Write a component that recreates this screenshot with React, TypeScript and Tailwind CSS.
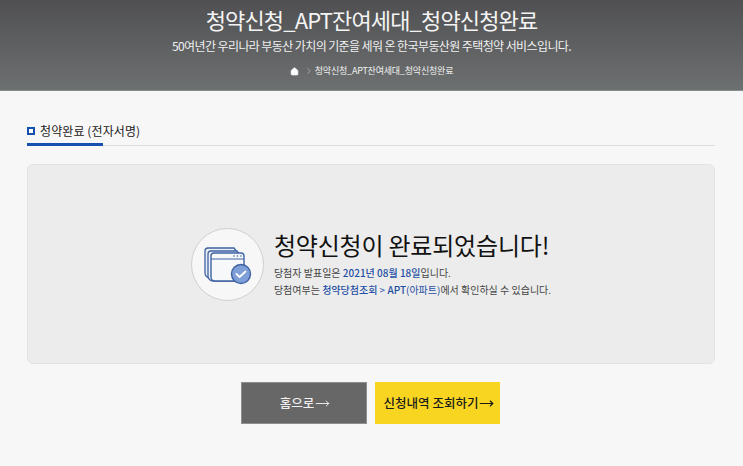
import { ChevronRight, Home, MoveRight } from "lucide-react";

const fontStack = "font-['Noto_Sans_CJK_KR','Noto_Sans',sans-serif]";

function WindowsIcon() {
  return (
    <svg width="50" height="42" viewBox="0 0 50 42" fill="none">
      <path d="M3 8 a3 3 0 0 1 3-3 h26 l3 4 v26 H8 a5 5 0 0 1-5-5 z" fill="#e9edf5" stroke="#3f62a3" strokeWidth="1.3" />
      <path d="M6 11 a3 3 0 0 1 3-3 h26 l3 4 v26 H11 a5 5 0 0 1-5-5 z" fill="#eef1f7" stroke="#3f62a3" strokeWidth="1.3" />
      <path d="M9 13 a3 3 0 0 1 3-3 h27 a3 3 0 0 1 3 3 v22 a3 3 0 0 1-3 3 H13 a4 4 0 0 1-4-4 z" fill="#f7f8fa" stroke="#3f62a3" strokeWidth="1.4" />
      <path d="M9 16 H42" stroke="#3f62a3" strokeWidth="1.2" />
      <circle cx="32" cy="13" r="0.8" fill="#3f62a3" />
      <circle cx="35.5" cy="13" r="0.8" fill="#3f62a3" />
      <circle cx="39" cy="13" r="0.8" fill="#3f62a3" />
      <circle cx="39" cy="31" r="9.5" fill="#7f9fd8" stroke="#3f62a3" strokeWidth="1.4" />
      <path d="M34.5 31 l3 3 l6-5.5" stroke="#fff" strokeWidth="1.8" strokeLinecap="round" strokeLinejoin="round" />
    </svg>
  );
}

export default function App() {
  return (
    <div className={`${fontStack} h-[466px] w-[743px] overflow-hidden bg-[#f7f7f7]`}>
      {/* HEADER */}
      <div className="flex h-[91px] flex-col items-center border-b border-[#8a8c8c] bg-gradient-to-b from-[#505052] to-[#6d7070] text-white">
        <h1 className="mt-[3px] text-[22px] leading-[32px] font-normal tracking-[-0.85px] text-[#f4f4f4]">
          청약신청_APT잔여세대_청약신청완료
        </h1>
        <p className="mt-[2px] text-[12px] leading-[18px] tracking-[-0.6px] text-[#f0f0f0]">
          50여년간 우리나라 부동산 가치의 기준을 세워 온 한국부동산원 주택청약 서비스입니다.
        </p>
        <div className="mt-[9px] flex items-center text-[9px] leading-[14px] text-[#f0f0f0]">
          <Home className="h-[9px] w-[9px] fill-white" strokeWidth={2} />
          <ChevronRight className="mr-[1px] ml-[5px] h-[10px] w-[10px]" strokeWidth={1} />
          <span className="tracking-[-0.2px]">청약신청_APT잔여세대_청약신청완료</span>
        </div>
      </div>

      <div className="pr-[28px] pl-[27px]">
        {/* SECTION TITLE */}
        <div className="mt-[31px] border-b border-[#dcdcdc]">
          <div className="-mb-px w-[76px] border-b-[3px] border-[#1650ae] pb-[3px]">
            <div className="flex w-[130px] items-center gap-[5px] text-[12px] leading-[18px] whitespace-nowrap text-[#222]">
              <span className="h-[8px] w-[8px] border-2 border-[#1650ae] bg-white" />
              <span className="tracking-[0.1px]">청약완료 (전자서명)</span>
            </div>
          </div>
        </div>

        {/* RESULT BOX */}
        <div className="mt-[18px] flex h-[200px] items-center justify-center rounded-[6px] border border-[#e3e3e3] bg-[#ececec]">
          <div className="flex items-center gap-[10px]">
            <div className="flex h-[73px] w-[73px] items-center justify-center rounded-full border border-[#cfcfcf] bg-[#f7f7f7]">
              <WindowsIcon />
            </div>
            <div className="pb-[2px]">
              <h2 className="text-[24px] leading-[34px] font-normal tracking-[-0.2px] text-[#111]">
                청약신청이 완료되었습니다!
              </h2>
              <p className="mt-[2px] text-[10px] leading-[17px] text-[#444]">
                당첨자 발표일은{" "}
                <span className="font-medium text-[#1f4fa3]">2021년 08월 18일</span>입니다.
              </p>
              <p className="text-[10px] leading-[17px] text-[#444]">
                당첨여부는 <span className="font-medium text-[#1f4fa3]">청약당첨조회</span>{" "}
                <span className="text-[#1f4fa3]">&gt;</span>{" "}
                <span className="text-[#1f4fa3]">
                  <span className="font-medium">APT</span>(아파트)
                </span>
                에서 확인하실 수 있습니다.
              </p>
            </div>
          </div>
        </div>

        {/* BUTTONS */}
        <div className="mt-[18px] flex justify-center gap-[8px] pr-[2px]">
          <button className="flex h-[42px] w-[126px] items-center justify-center gap-[1px] border border-[#8f8f8f] bg-[#676767] pl-[3px] text-[12.5px] font-medium text-[#f0f0f0]">
            홈으로
            <MoveRight className="h-[15px] w-[15px]" strokeWidth={1.5} />
          </button>
          <button className="flex h-[42px] w-[125px] items-center justify-center gap-[1px] bg-[#f8d521] pl-[4px] text-[12.5px] font-medium text-[#1a1a1a]">
            신청내역 조회하기
            <MoveRight className="h-[15px] w-[15px]" strokeWidth={1.8} />
          </button>
        </div>
      </div>
    </div>
  );
}
